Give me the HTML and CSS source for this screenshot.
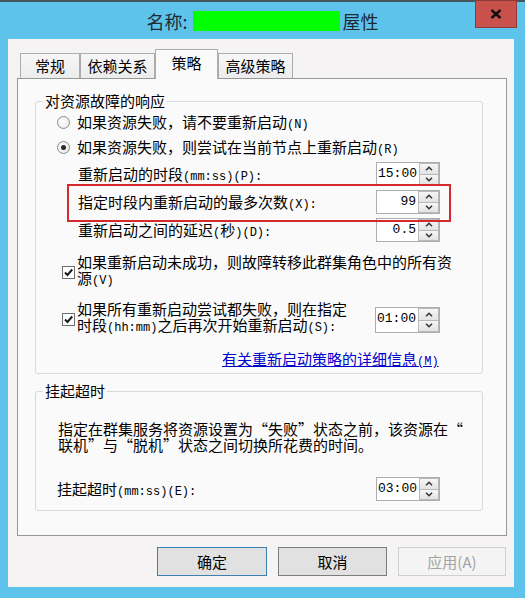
FILE: index.html
```html
<!DOCTYPE html>
<html lang="zh-CN">
<head>
    <meta charset="UTF-8">
    <title>属性</title>
    <link rel="stylesheet" href="styles.css">
</head>
<body>

<div class="window">
    <div class="topedge"></div>

    <!-- Barra de título -->
    <div class="titlebar">
        <div class="title">名称:<span class="redact"></span>屋性</div>
        <div class="close">
            <svg width="12" height="10" viewBox="0 0 12 10"><path d="M1.5 1 L10.5 9 M10.5 1 L1.5 9" stroke="#111" stroke-width="2.6"/></svg>
        </div>
    </div>

    <div class="client">
        <div class="tabs">
            <div class="tab t1">常规</div>
            <div class="tab t2">依赖关系</div>
            <div class="tab t3 active">策略</div>
            <div class="tab t4">高级策略</div>
        </div>

        <div class="panel">
            <!-- Grupo 1 -->
            <fieldset class="group g1">
                <legend>对资源故障的响应</legend>
                <div class="gbody">
                    <div class="radio-row r1"><span class="radio"></span><span>如果资源失败，请不要重新启动<span class="en">(N)</span></span></div>
                    <div class="radio-row r2"><span class="radio on"></span><span>如果资源失败，则尝试在当前节点上重新启动<span class="en">(R)</span></span></div>

                    <div class="field">
                        <span>重新启动的时段<span class="en">(mm:ss)(P):</span></span>
                        <div class="spin"><span class="spin-val">15:00</span><span class="spin-btns"><span class="up"><svg width="8" height="5" viewBox="0 0 8 5"><path d="M1 4.2 L4 1.2 L7 4.2" fill="none" stroke="#333" stroke-width="1.5"/></svg></span><span class="dn"><svg width="8" height="5" viewBox="0 0 8 5"><path d="M1 0.8 L4 3.8 L7 0.8" fill="none" stroke="#333" stroke-width="1.5"/></svg></span></span></div>
                    </div>
                    <div class="field hl">
                        <span>指定时段内重新启动的最多次数<span class="en">(X):</span></span>
                        <div class="spin"><span class="spin-val num">99</span><span class="spin-btns"><span class="up"><svg width="8" height="5" viewBox="0 0 8 5"><path d="M1 4.2 L4 1.2 L7 4.2" fill="none" stroke="#333" stroke-width="1.5"/></svg></span><span class="dn"><svg width="8" height="5" viewBox="0 0 8 5"><path d="M1 0.8 L4 3.8 L7 0.8" fill="none" stroke="#333" stroke-width="1.5"/></svg></span></span></div>
                    </div>
                    <div class="field">
                        <span>重新启动之间的延迟<span class="en">(</span>秒<span class="en">)(D):</span></span>
                        <div class="spin"><span class="spin-val num">0.5</span><span class="spin-btns"><span class="up"><svg width="8" height="5" viewBox="0 0 8 5"><path d="M1 4.2 L4 1.2 L7 4.2" fill="none" stroke="#333" stroke-width="1.5"/></svg></span><span class="dn"><svg width="8" height="5" viewBox="0 0 8 5"><path d="M1 0.8 L4 3.8 L7 0.8" fill="none" stroke="#333" stroke-width="1.5"/></svg></span></span></div>
                    </div>

                    <div class="check-row cb1">
                        <span class="box"><svg width="11" height="11" viewBox="0 0 11 11"><path d="M2 5.5 L4.5 8 L9.2 2.5" fill="none" stroke="#1a1a1a" stroke-width="2"/></svg></span>
                        <span class="check-label">如果重新启动未成功，则故障转移此群集角色中的所有资<br>源<span class="en">(V)</span></span>
                    </div>
                    <div class="check-row cb2">
                        <span class="box"><svg width="11" height="11" viewBox="0 0 11 11"><path d="M2 5.5 L4.5 8 L9.2 2.5" fill="none" stroke="#1a1a1a" stroke-width="2"/></svg></span>
                        <span class="check-label">如果所有重新启动尝试都失败，则在指定<br>时段<span class="en">(hh:mm)</span>之后再次开始重新启动<span class="en">(S):</span></span>
                        <div class="spin tall"><span class="spin-val">01:00</span><span class="spin-btns"><span class="up"><svg width="8" height="5" viewBox="0 0 8 5"><path d="M1 4.2 L4 1.2 L7 4.2" fill="none" stroke="#333" stroke-width="1.5"/></svg></span><span class="dn"><svg width="8" height="5" viewBox="0 0 8 5"><path d="M1 0.8 L4 3.8 L7 0.8" fill="none" stroke="#333" stroke-width="1.5"/></svg></span></span></div>
                    </div>

                    <a class="link" href="#">有关重新启动策略的详细信息<span class="en">(M)</span></a>
                </div>
            </fieldset>

            <!-- Grupo 2 -->
            <fieldset class="group g2">
                <legend>挂起超时</legend>
                <p class="desc">指定在群集服务将资源设置为“失败”状态之前，该资源在“<br>联机”与“脱机”状态之间切换所花费的时间。</p>
                <div class="hang-row">
                    <span>挂起超时<span class="en">(mm:ss)(E):</span></span>
                    <div class="spin"><span class="spin-val">03:00</span><span class="spin-btns"><span class="up"><svg width="8" height="5" viewBox="0 0 8 5"><path d="M1 4.2 L4 1.2 L7 4.2" fill="none" stroke="#333" stroke-width="1.5"/></svg></span><span class="dn"><svg width="8" height="5" viewBox="0 0 8 5"><path d="M1 0.8 L4 3.8 L7 0.8" fill="none" stroke="#333" stroke-width="1.5"/></svg></span></span></div>
                </div>
            </fieldset>
        </div>

        <div class="buttons">
            <div class="btn ok">确定</div>
            <div class="btn cancel">取消</div>
            <div class="btn off">应用(A)</div>
        </div>
    </div>
</div>

</body>
</html>
```

FILE: styles.css
```css
body {
    margin: 0;
    background-color: #5ec3ea;
    font-family: "Noto Sans CJK SC", sans-serif;
    color: #000;
}

.window {
    width: 525px;
    height: 598px;
    overflow: hidden;
}

.topedge {
    height: 2px;
    background-color: #46555c;
}

/* Barra de título */
.titlebar {
    display: flex;
    height: 37px;
}

.title {
    flex: 1;
    padding-left: 50px;
    padding-top: 9px;
    text-align: center;
    font-size: 18px;
    line-height: 20px;
    color: #1d2b33;
}

.redact {
    display: inline-block;
    width: 147px;
    height: 20px;
    margin: 0 3px 0 5px;
    vertical-align: top;
    background-color: #00ff00;
}

.close {
    width: 42px;
    height: 28px;
    margin-top: -2px;
    margin-right: 8px;
    box-sizing: border-box;
    border: 1px solid #8c3c37;
    background-color: #c9514b;
    display: flex;
    align-items: center;
    justify-content: center;
}

.client {
    margin-left: 8px;
    width: 506px;
    height: 548px;
    background-color: #f5f3f3;
}

/* Abas */
.tabs {
    display: flex;
    align-items: flex-end;
    height: 39px;
    padding-left: 12px;
    box-sizing: border-box;
}

.tab {
    box-sizing: border-box;
    height: 25px;
    border: 1px solid #acacac;
    border-bottom: none;
    background: linear-gradient(#f7f7f7, #ececec);
    font-size: 15px;
    line-height: 23px;
    text-align: center;
}

.t1 { width: 60px; }
.t2 { width: 75px; }
.t3 { width: 63px; }
.t4 { width: 75px; }

.tab.active {
    position: relative;
    height: 30px;
    margin-bottom: -1px;
    line-height: 25px;
    background: #fbfafa;
}

.panel {
    margin-left: 9px;
    width: 490px;
    height: 458px;
    box-sizing: border-box;
    border: 1px solid #969797;
    background-color: #fbfafa;
    padding: 13px 0 0 17px;
}

/* Grupos */
.group {
    width: 448px;
    min-width: 0;
    box-sizing: border-box;
    margin: 0;
    padding: 0 0 5px 0;
    border: 1px solid #d9d9d9;
    border-radius: 3px;
    font-size: 15px;
}

.group legend {
    font-size: 15px;
    line-height: 18px;
    padding: 0 2px;
    margin-left: 7px;
}

.gbody {
    padding-left: 21px;
}

.en {
    font-family: "Liberation Mono", monospace;
    font-size: 12px;
    line-height: 1;
}

.radio-row {
    display: flex;
    align-items: center;
    gap: 7px;
    line-height: 18px;
}

.r1 { height: 24px; }
.r2 { height: 26px; }

.radio {
    width: 13px;
    height: 13px;
    box-sizing: border-box;
    border: 1px solid #8c8c8c;
    border-radius: 50%;
    background: radial-gradient(circle at 40% 40%, #ffffff, #e4e4e4);
    display: flex;
    align-items: center;
    justify-content: center;
}

.radio.on::after {
    content: "";
    width: 5px;
    height: 5px;
    border-radius: 50%;
    background-color: #2a2a2a;
}

.field {
    display: flex;
    align-items: center;
    justify-content: space-between;
    width: 362px;
    height: 28px;
    margin-left: 21px;
    line-height: 18px;
}

/* Destaque vermelho */
.field.hl {
    position: relative;
}

.field.hl::after {
    content: "";
    position: absolute;
    left: -11px;
    right: -11px;
    top: -4px;
    bottom: -6px;
    border: 2px solid #d42a2e;
}

/* Campo numérico */
.spin {
    display: flex;
    width: 64px;
    height: 24px;
    box-sizing: border-box;
    border: 1px solid #abadb3;
    background-color: #fff;
}

.spin.tall {
    height: 26px;
    width: 65px;
    margin-left: auto;
    margin-top: 6px;
}

.spin-val {
    flex: 1;
    padding: 0 2px 0 1px;
    font-family: "Liberation Mono", monospace;
    font-size: 13px;
    line-height: 22px;
}

.spin-val.num {
    text-align: right;
}

.spin-btns {
    width: 21px;
    display: flex;
    flex-direction: column;
}

.spin-btns span {
    flex: 1;
    display: flex;
    align-items: center;
    justify-content: center;
    border: 1px solid #b9b9b9;
    background: linear-gradient(#f6f6f6, #e3e3e3);
}

.spin-btns .dn {
    border-top: none;
}

/* Caixas de seleção */
.check-row {
    display: flex;
    align-items: flex-start;
    margin-left: 5px;
    line-height: 16px;
}

.cb1 {
    height: 32px;
    margin-top: 10px;
}

.cb2 {
    width: 378px;
    height: 32px;
    margin-top: 15px;
}

.box {
    flex: none;
    width: 13px;
    height: 13px;
    box-sizing: border-box;
    margin-top: 12px;
    margin-right: 2px;
    border: 1px solid #6f6f6f;
    background-color: #fff;
    display: flex;
    align-items: center;
    justify-content: center;
}

.check-label {
    white-space: nowrap;
}

.link {
    display: block;
    width: max-content;
    height: 18px;
    margin: 17px 0 0 165px;
    line-height: 18px;
    color: #0000cc;
    text-decoration: underline;
}

.g2 {
    margin-top: 8px;
    padding-bottom: 7px;
}

.desc {
    height: 32px;
    margin: 21px 0 0 22px;
    line-height: 16px;
    white-space: nowrap;
}

.hang-row {
    display: flex;
    align-items: center;
    justify-content: space-between;
    width: 383px;
    height: 28px;
    margin: 22px 0 0 21px;
    line-height: 18px;
}

/* Botões */
.buttons {
    display: flex;
    justify-content: flex-end;
    gap: 11px;
    margin-top: 11px;
    padding-right: 8px;
}

.btn {
    height: 29px;
    box-sizing: border-box;
    border: 1px solid #adadad;
    background-color: #e1e1e1;
    font-size: 15px;
    display: flex;
    align-items: center;
    justify-content: center;
}

.btn.ok {
    width: 110px;
    border-color: #3c7fb1;
}

.btn.cancel {
    width: 109px;
    border-color: #7d7d7d;
}

.btn.off {
    width: 108px;
    color: #a3a3a3;
    background-color: #f4f4f4;
    border-color: #d0d0d0;
}
```
